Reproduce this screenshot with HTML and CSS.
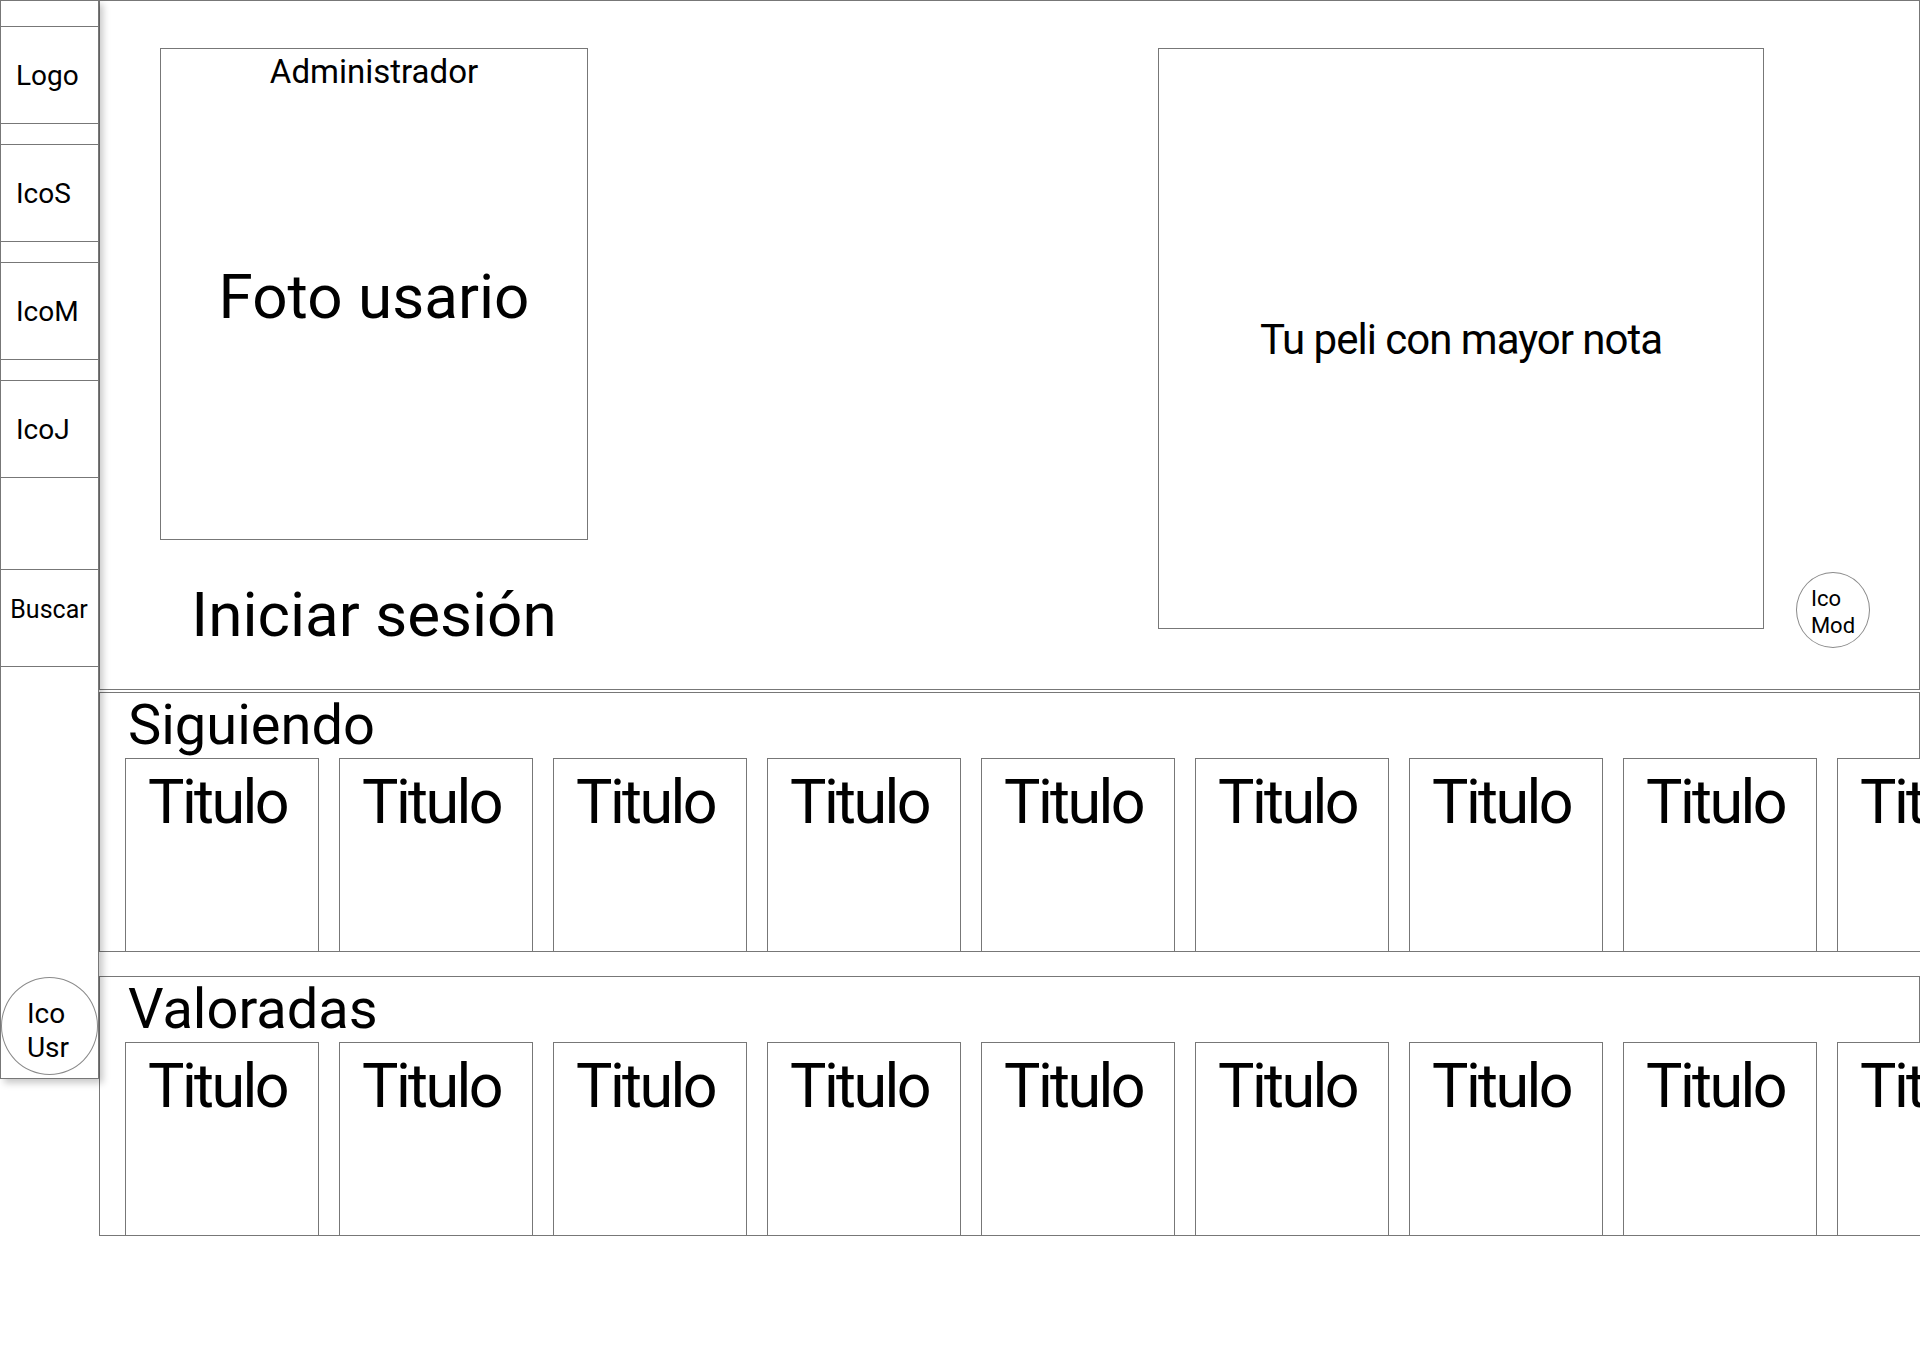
FILE: index.html
```html
<!DOCTYPE html>
<html lang="es">
<head>
<meta charset="utf-8">
<title>Inicio</title>
<link rel="stylesheet" href="styles.css">
</head>
<body>
<div class="page">
  <aside class="sidebar">
    <div class="side-top"></div>
    <div class="side-box">Logo</div>
    <div class="side-box">IcoS</div>
    <div class="side-box">IcoM</div>
    <div class="side-box">IcoJ</div>
    <div class="side-box side-search">Buscar</div>
    <div class="side-fill"></div>
    <div class="circle circle-usr"><span class="circle-text">Ico<br>Usr</span></div>
  </aside>
  <main class="main">
    <section class="hero">
      <div class="hero-left">
        <div class="photo">
          <div class="photo-role">Administrador</div>
          <div class="photo-label">Foto usario</div>
        </div>
        <div class="login">Iniciar sesión</div>
      </div>
      <div class="best">Tu peli con mayor nota</div>
      <div class="circle circle-mod"><span class="circle-text">Ico<br>Mod</span></div>
    </section>
    <section class="strip strip-first">
      <h2 class="strip-title">Siguiendo</h2>
      <div class="cards">
        <div class="card">Titulo</div>
        <div class="card">Titulo</div>
        <div class="card">Titulo</div>
        <div class="card">Titulo</div>
        <div class="card">Titulo</div>
        <div class="card">Titulo</div>
        <div class="card">Titulo</div>
        <div class="card">Titulo</div>
        <div class="card">Titulo</div>
        <div class="card">Titulo</div>
      </div>
    </section>
    <section class="strip strip-second">
      <h2 class="strip-title">Valoradas</h2>
      <div class="cards">
        <div class="card">Titulo</div>
        <div class="card">Titulo</div>
        <div class="card">Titulo</div>
        <div class="card">Titulo</div>
        <div class="card">Titulo</div>
        <div class="card">Titulo</div>
        <div class="card">Titulo</div>
        <div class="card">Titulo</div>
        <div class="card">Titulo</div>
        <div class="card">Titulo</div>
      </div>
    </section>
  </main>
</div>
</body>
</html>
```

FILE: styles.css
```css
* {
  box-sizing: border-box;
}

html,
body {
  margin: 0;
  padding: 0;
  background: #ffffff;
  overflow: hidden;
}

body {
  font-family: Roboto, "Liberation Sans", sans-serif;
  color: #000000;
}

.page {
  display: flex;
  align-items: flex-start;
  width: 1920px;
}

/* Sidebar */
.sidebar {
  position: relative;
  z-index: 2;
  flex: 0 0 99px;
  width: 99px;
  height: 1079px;
  border: 1px solid #777777;
  background: #ffffff;
  box-shadow: 4px 4px 7px rgba(0, 0, 0, 0.22);
  display: flex;
  flex-direction: column;
}

.side-top {
  height: 25px;
  flex: 0 0 25px;
}

.side-box {
  flex: 0 0 98px;
  height: 98px;
  border-top: 1px solid #777777;
  border-bottom: 1px solid #777777;
  display: flex;
  align-items: center;
  padding-left: 15px;
  font-size: 28px;
  margin-bottom: 20px;
}

.side-box:nth-of-type(5) {
  margin-bottom: 91px;
}

.side-search {
  justify-content: center;
  padding-left: 0;
  padding-right: 1px;
  padding-bottom: 18px;
  font-size: 25px;
  margin-bottom: 0;
}

.side-fill {
  flex: 1 1 auto;
}

.circle {
  border: 1px solid #8a8a8a;
  border-radius: 50%;
  display: flex;
  align-items: center;
  justify-content: center;
  background: #ffffff;
  flex-shrink: 0;
}

.circle-text {
  text-align: left;
}

.circle-usr {
  width: 97px;
  height: 98px;
  margin-bottom: 3px;
  font-size: 28px;
  line-height: 34px;
  padding-top: 10px;
  padding-right: 3px;
}

/* Main column */
.main {
  flex: 0 0 1821px;
  width: 1821px;
  display: flex;
  flex-direction: column;
}

.hero {
  height: 690px;
  border: 1px solid #777777;
  display: flex;
  padding: 47px 49px 41px 60px;
}

.hero-left {
  width: 428px;
  display: flex;
  flex-direction: column;
  align-items: center;
}

.photo {
  flex: 0 0 492px;
  width: 428px;
  height: 492px;
  border: 1px solid #777777;
  display: flex;
  flex-direction: column;
  align-items: center;
  padding-top: 4px;
}

.photo-role {
  font-size: 33px;
  line-height: 38px;
}

.photo-label {
  font-size: 62px;
  line-height: 72px;
  margin-top: 170px;
}

.login {
  flex-shrink: 0;
  font-size: 62px;
  line-height: 72px;
  margin-top: 39px;
}

.best {
  flex-shrink: 0;
  margin-left: auto;
  width: 606px;
  height: 581px;
  border: 1px solid #777777;
  display: flex;
  align-items: center;
  justify-content: center;
  font-size: 42px;
  letter-spacing: -1px;
  padding-top: 2px;
}

.circle-mod {
  align-self: flex-end;
  margin-left: 32px;
  width: 74px;
  height: 76px;
  font-size: 22px;
  line-height: 27px;
  padding-top: 3px;
}

/* Strips */
.strip {
  height: 260px;
  border: 1px solid #777777;
  background: #ffffff;
  display: flex;
  flex-direction: column;
}

.strip-first {
  margin-top: 2px;
}

.strip-second {
  margin-top: 24px;
}

.strip-title {
  margin: 0;
  height: 65px;
  flex: 0 0 65px;
  padding-left: 28px;
  font-size: 56px;
  line-height: 65px;
  font-weight: 400;
}

.cards {
  display: flex;
  gap: 20px;
  padding-left: 25px;
}

.card {
  flex: 0 0 194px;
  width: 194px;
  height: 194px;
  border: 1px solid #777777;
  background: #ffffff;
  text-align: center;
  font-size: 61px;
  line-height: 70px;
  letter-spacing: -2.6px;
  padding-top: 8px;
  padding-right: 9px;
}
```
